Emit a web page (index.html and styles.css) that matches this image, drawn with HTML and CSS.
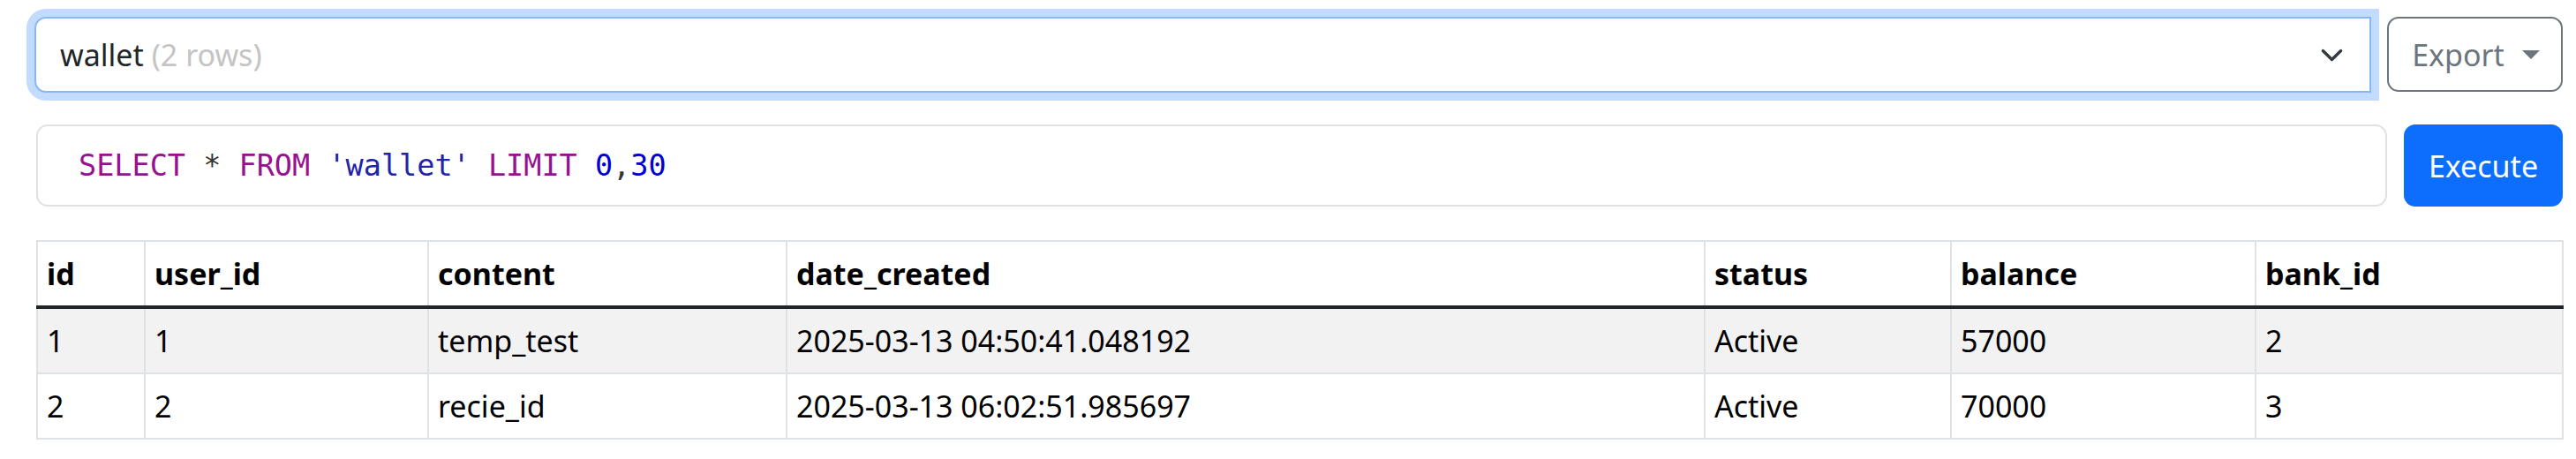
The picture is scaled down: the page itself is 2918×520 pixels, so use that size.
FILE: index.html
```html
<!DOCTYPE html>
<html lang="en">
<head>
<meta charset="utf-8">
<title>SQL browser</title>
<link rel="stylesheet" href="styles.css">
</head>
<body>
<div class="page">
  <div class="toolbar">
    <div class="table-select">
      <span class="select-label">wallet <span class="muted">(2 rows)</span></span>
      <svg class="chevron" width="27" height="27" viewBox="0 0 16 16" aria-hidden="true">
        <path d="M2 5l6 6 6-6" fill="none" stroke="#343a40" stroke-width="2" stroke-linecap="round" stroke-linejoin="round"/>
      </svg>
    </div>
    <button class="btn-export" type="button">Export<span class="caret"></span></button>
  </div>

  <div class="query-row">
    <div class="sql-editor"><code class="sql-line"><span class="kw">SELECT</span> <span class="op">*</span> <span class="kw">FROM</span> <span class="str">'wallet'</span> <span class="kw">LIMIT</span> <span class="num">0</span><span class="op">,</span><span class="num">30</span></code></div>
    <button class="btn-execute" type="button">Execute</button>
  </div>

  <table class="results">
    <colgroup>
      <col class="c-id"><col class="c-user"><col class="c-content"><col class="c-date"><col class="c-status"><col class="c-balance"><col class="c-bank">
    </colgroup>
    <thead>
      <tr><th>id</th><th>user_id</th><th>content</th><th>date_created</th><th>status</th><th>balance</th><th>bank_id</th></tr>
    </thead>
    <tbody>
      <tr class="striped"><td>1</td><td>1</td><td>temp_test</td><td>2025-03-13 04:50:41.048192</td><td>Active</td><td>57000</td><td>2</td></tr>
      <tr><td>2</td><td>2</td><td>recie_id</td><td>2025-03-13 06:02:51.985697</td><td>Active</td><td>70000</td><td>3</td></tr>
    </tbody>
  </table>
</div>
</body>
</html>
```

FILE: styles.css
```css
* { box-sizing: border-box; }

html, body {
  margin: 0;
  padding: 0;
  background: #ffffff;
}

body {
  font-family: "Noto Sans", "Open Sans", "Liberation Sans", sans-serif;
  font-size: 34px;
  color: #212529;
}

.page {
  padding: 19px 15px 0 39px;
}

.toolbar {
  display: flex;
  gap: 18px;
  height: 86px;
}

.table-select {
  flex: 1;
  display: flex;
  align-items: center;
  justify-content: space-between;
  height: 86px;
  padding: 0 29px 0 27px;
  border: 2px solid #86b7fe;
  border-radius: 13px 0 0 13px;
  box-shadow: 0 0 0 9px rgba(13, 110, 253, 0.25);
  background: #ffffff;
}

.select-label {
  line-height: 54px;
  color: #212529;
}

.muted {
  color: #c4c4c4;
}

.chevron {
  display: block;
  flex: none;
}

.btn-export {
  width: 199px;
  height: 85px;
  display: flex;
  align-items: center;
  justify-content: center;
  padding: 0 0 0 2px;
  font: inherit;
  color: #6c757d;
  background: #ffffff;
  border: 2px solid #6c757d;
  border-radius: 13px;
}

.caret {
  display: inline-block;
  margin-left: 20px;
  border-top: 10px solid #6c757d;
  border-left: 10px solid transparent;
  border-right: 10px solid transparent;
}

.query-row {
  display: flex;
  gap: 19px;
  margin: 36px 0 0 2px;
  height: 93px;
}

.sql-editor {
  flex: 1;
  display: flex;
  align-items: center;
  padding-left: 46px;
  border: 2px solid #dfe1e4;
  border-radius: 13px;
}

.sql-line {
  display: block;
  font-family: "DejaVu Sans Mono", "Liberation Mono", monospace;
  font-size: 33.5px;
  line-height: 50px;
  color: #333333;
  white-space: pre;
}

.kw { color: #951391; }
.str { color: #2323a6; }
.num { color: #0000d0; }
.op { color: #333333; }

.btn-execute {
  width: 180px;
  height: 93px;
  font: inherit;
  color: #ffffff;
  background: #0d6efd;
  border: none;
  border-radius: 13px;
  padding: 0;
}

.results {
  margin: 38px 0 0 2px;
  width: calc(100% - 3px);
  table-layout: fixed;
  border-collapse: collapse;
  color: #000000;
}

.c-id { width: 122px; }
.c-user { width: 321px; }
.c-content { width: 406px; }
.c-date { width: 1040px; }
.c-status { width: 279px; }
.c-balance { width: 345px; }
.c-bank { width: 348px; }

.results th,
.results td {
  border: 2px solid #dee2e6;
  padding: 9px 10px;
  line-height: 54px;
  text-align: left;
  vertical-align: middle;
  white-space: nowrap;
}

.results th {
  font-weight: 700;
}

.results tbody tr:first-child td {
  border-top: 4px solid #212529;
}

.results tr.striped td {
  background: #f2f2f2;
}
```
